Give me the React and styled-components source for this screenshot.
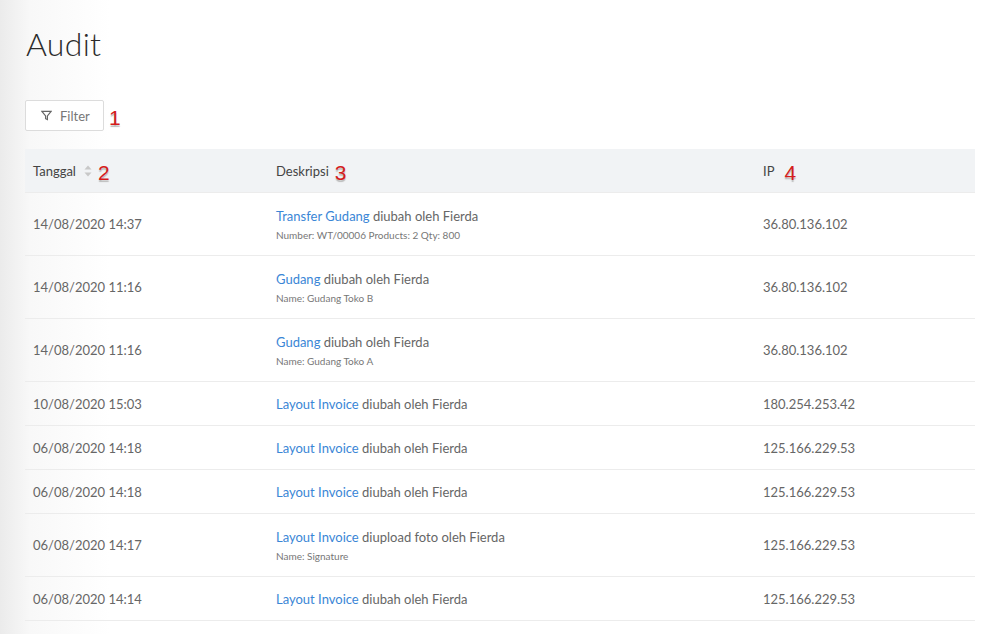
import React from 'react';
import styled, { createGlobalStyle } from 'styled-components';

const Global = createGlobalStyle`
  body { margin: 0; font-family: Lato, "Open Sans", sans-serif; background: #fff; overflow: hidden; }
`;

const Page = styled.div`
  height: 634px;
  padding: 24px 25px 0 25px;
  background: linear-gradient(to right, #ebebeb 0px, #f8f8f8 30px, #fff 110px);
  box-sizing: border-box;
`;

const Title = styled.h1`
  margin: 0 0 37px 1px;
  font-weight: 300;
  font-size: 32px;
  color: #2b2b2b;
  letter-spacing: 0.3px;
`;

const FilterRow = styled.div`
  display: flex;
  align-items: center;
  margin-bottom: 18px;
`;

const FilterButton = styled.button`
  display: flex;
  align-items: center;
  gap: 8px;
  height: 31px;
  width: 79px;
  padding: 0 0 0 15px;
  border: 1px solid #dcdcdc;
  border-radius: 2px;
  background: #fff;
  color: #777;
  font: 13px Lato, sans-serif;
`;

const Num = styled.span`
  color: #d51d1d;
  font: 21px "Liberation Sans", sans-serif;
  margin-left: ${p => p.$gap || 5}px;
  margin-top: 4px;
  text-shadow: 0 2px 1px #bbb;
  line-height: 1;
`;

const Table = styled.div`
  width: 950px;
`;

const Row = styled.div`
  display: grid;
  grid-template-columns: 243px 487px 1fr;
  align-items: center;
  height: ${p => (p.$tall ? 62 : 43)}px;
  padding-left: 8px;
  border-bottom: 1px solid #ececec;
  background: ${p => (p.$head ? '#f1f3f5' : 'transparent')};
  font-size: 13px;
  color: ${p => (p.$head ? '#444' : '#666')};
`;

const HeadCell = styled.div`
  display: flex;
  align-items: center;
`;

const Desc = styled.div`
  display: flex;
  flex-direction: column;
  gap: 5px;
`;

const Link = styled.span`
  color: #3a86d6;
`;

const Sub = styled.span`
  font-size: 10px;
  color: #777;
`;

const Sort = () => (
  <svg width="8" height="12" viewBox="0 0 8 12" style={{ marginLeft: 8 }}>
    <path d="M4 0.5 L7.5 4.5 H0.5 Z" fill="#c8c8c8" />
    <path d="M4 11.5 L7.5 7.5 H0.5 Z" fill="#c8c8c8" />
  </svg>
);

const rows = [
  ['14/08/2020 14:37', 'Transfer Gudang', 'diubah oleh Fierda', 'Number: WT/00006 Products: 2 Qty: 800', '36.80.136.102'],
  ['14/08/2020 11:16', 'Gudang', 'diubah oleh Fierda', 'Name: Gudang Toko B', '36.80.136.102'],
  ['14/08/2020 11:16', 'Gudang', 'diubah oleh Fierda', 'Name: Gudang Toko A', '36.80.136.102'],
  ['10/08/2020 15:03', 'Layout Invoice', 'diubah oleh Fierda', null, '180.254.253.42'],
  ['06/08/2020 14:18', 'Layout Invoice', 'diubah oleh Fierda', null, '125.166.229.53'],
  ['06/08/2020 14:18', 'Layout Invoice', 'diubah oleh Fierda', null, '125.166.229.53'],
  ['06/08/2020 14:17', 'Layout Invoice', 'diupload foto oleh Fierda', 'Name: Signature', '125.166.229.53'],
  ['06/08/2020 14:14', 'Layout Invoice', 'diubah oleh Fierda', null, '125.166.229.53'],
  ['06/08/2020 14:13', 'Layout Invoice', 'diubah oleh Fierda', null, '125.166.229.53'],
];

export default function App() {
  return (
    <Page>
      <Global />
      <Title>Audit</Title>
      <FilterRow>
        <FilterButton>
          <svg width="11" height="11" viewBox="0 0 12 12" fill="none" stroke="#666" strokeWidth="1.3">
            <path d="M1 1.5 H11 L7 6.5 V10.5 L5 9.5 V6.5 Z" />
          </svg>
          Filter
        </FilterButton>
        <Num>1</Num>
      </FilterRow>
      <Table>
        <Row $head>
          <HeadCell>Tanggal<Sort /><Num $gap={6}>2</Num></HeadCell>
          <HeadCell>Deskripsi<Num $gap={6}>3</Num></HeadCell>
          <HeadCell>IP<Num $gap={10}>4</Num></HeadCell>
        </Row>
        {rows.map(([d, l, t, s, ip], i) => (
          <Row key={i} $tall={!!s}>
            <div>{d}</div>
            <Desc>
              <div><Link>{l}</Link> {t}</div>
              {s && <Sub>{s}</Sub>}
            </Desc>
            <div>{ip}</div>
          </Row>
        ))}
      </Table>
    </Page>
  );
}
